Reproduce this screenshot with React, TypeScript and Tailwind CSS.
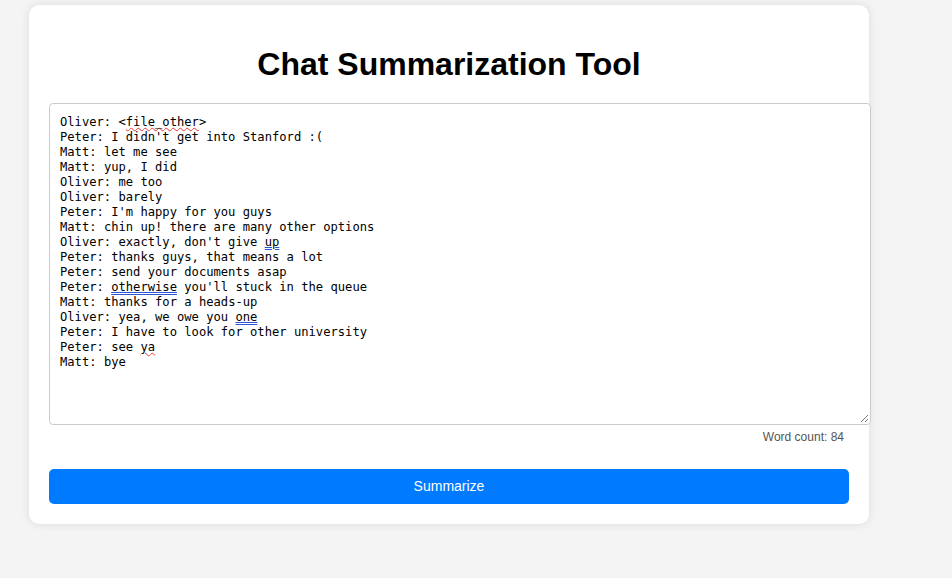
const lines: { speaker: string; parts: (string | { t: string; k: 'spell' | 'grammar' })[] }[] = [
  { speaker: 'Oliver', parts: ['<', { t: 'file_other', k: 'spell' }, '>'] },
  { speaker: 'Peter', parts: ["I didn't get into Stanford :("] },
  { speaker: 'Matt', parts: ['let me see'] },
  { speaker: 'Matt', parts: ['yup, I did'] },
  { speaker: 'Oliver', parts: ['me too'] },
  { speaker: 'Oliver', parts: ['barely'] },
  { speaker: 'Peter', parts: ["I'm happy for you guys"] },
  { speaker: 'Matt', parts: ['chin up! there are many other options'] },
  { speaker: 'Oliver', parts: ["exactly, don't give ", { t: 'up', k: 'grammar' }] },
  { speaker: 'Peter', parts: ['thanks guys, that means a lot'] },
  { speaker: 'Peter', parts: ['send your documents asap'] },
  { speaker: 'Peter', parts: [{ t: 'otherwise', k: 'grammar' }, " you'll stuck in the queue"] },
  { speaker: 'Matt', parts: ['thanks for a heads-up'] },
  { speaker: 'Oliver', parts: ['yea, we owe you ', { t: 'one', k: 'grammar' }] },
  { speaker: 'Peter', parts: ['I have to look for other university'] },
  { speaker: 'Peter', parts: ['see ', { t: 'ya', k: 'spell' }] },
  { speaker: 'Matt', parts: ['bye'] },
]

export default function App() {
  return (
    <div className="min-h-[578px] bg-[#f4f4f4] pt-[5px] pl-[29px] font-['Liberation_Sans',Arial,sans-serif]">
      <div className="w-[840px] bg-white rounded-[10px] shadow-[0_0_10px_rgba(0,0,0,0.1)] p-5">
        {/* Title */}
        <h1 className="text-[32px] font-bold text-black text-center leading-[37px] mt-[21px] mb-[20px]">
          Chat Summarization Tool
        </h1>

        {/* Chat input box */}
        <div className="relative w-[822px] h-[322px] border border-[#cccccc] rounded-[4px] bg-white px-[10px] pt-[11px] pb-[9px] font-['DejaVu_Sans_Mono',monospace] text-[12.15px] leading-[15px] text-black whitespace-pre">
          {lines.map((line, i) => (
            <div key={i}>
              {line.speaker}:{' '}
              {line.parts.map((p, j) =>
                typeof p === 'string' ? (
                  <span key={j}>{p}</span>
                ) : p.k === 'spell' ? (
                  <span key={j} className="underline decoration-wavy decoration-[#e53935] decoration-1 underline-offset-[1px]">
                    {p.t}
                  </span>
                ) : (
                  <span key={j} className="underline decoration-double decoration-[#2b57d6] decoration-1 underline-offset-[1px]">
                    {p.t}
                  </span>
                )
              )}
            </div>
          ))}
          <svg className="absolute right-[1px] bottom-[1px]" width="9" height="9" viewBox="0 0 9 9">
            <path d="M8 1 L1 8 M8 5 L5 8" stroke="#777" strokeWidth="1" />
          </svg>
        </div>

        {/* Word count */}
        <div className="text-right text-[12px] leading-[14px] text-[#555] mt-[5px] pr-[5px]">Word count: 84</div>

        {/* Submit */}
        <button className="mt-[25px] w-full h-[35px] rounded-[5px] bg-[#007bff] text-white text-[14px]">
          Summarize
        </button>
      </div>
    </div>
  )
}
